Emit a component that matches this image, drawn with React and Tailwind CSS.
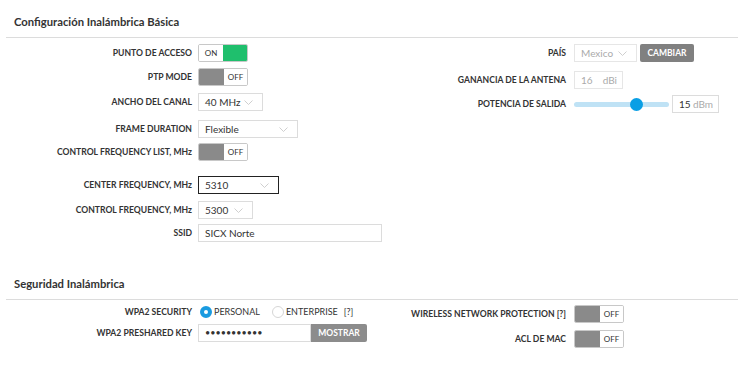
import React from "react";

const Chevron = () => (
  <svg width="9" height="5" viewBox="0 0 9 5" className="shrink-0">
    <polyline points="0.5,0.5 4.5,4.5 8.5,0.5" fill="none" stroke="#c9c9c9" strokeWidth="0.9" />
  </svg>
);

const Label = ({ children, right }) => (
  <div
    className={`${right ? "w-[191px] pr-[8px]" : "w-[198px] pr-[6px]"} shrink-0 text-right text-[8.6px] font-bold text-[#333] whitespace-nowrap`}
  >
    {children}
  </div>
);

const Toggle = ({ on }) =>
  on ? (
    <div className="flex h-[18px] w-[50px] border border-[#c8c8c8] rounded-[2px] overflow-hidden">
      <div className="w-[24px] flex items-center justify-center text-[8px] text-[#333] bg-white">ON</div>
      <div className="flex-1 bg-[#1fbf6d]" />
    </div>
  ) : (
    <div className="flex h-[18px] w-[50px] border border-[#c8c8c8] rounded-[2px] overflow-hidden">
      <div className="w-[25px] bg-[#8a8a8a]" />
      <div className="flex-1 flex items-center justify-center text-[8px] text-[#333] bg-white">OFF</div>
    </div>
  );

const Select = ({ value, w, dark, disabled }) => (
  <div
    className={`${w} h-[18px] flex items-center justify-between pl-[6px] pr-[9px] border ${
      dark ? "border-[#222]" : disabled ? "border-[#e6e6e6]" : "border-[#dcdcdc]"
    } bg-white`}
  >
    <span className={`text-[10px] ${disabled ? "text-[#aaa]" : "text-[#333]"}`}>{value}</span>
    <Chevron />
  </div>
);

const Row = ({ label, children, mt, right }) => (
  <div className={`flex items-center h-[18px] ${mt}`}>
    <Label right={right}>{label}</Label>
    <div className="flex items-center">{children}</div>
  </div>
);

export default function App() {
  return (
    <div className="w-[738px] h-[372px] bg-white overflow-hidden" style={{ fontFamily: "Lato, 'Open Sans', sans-serif" }}>
      {/* Section 1 */}
      <div className="pt-[15px] pl-[14px] h-[37px] text-[11.25px] font-bold text-[#333] leading-[14px]">
        Configuración Inalámbrica Básica
      </div>
      <div className="ml-[6px] h-px bg-[#dcdcdc]" />
      <div className="flex">
        <div className="w-[383px] shrink-0 flex flex-col">
          <Row label="PUNTO DE ACCESO" mt="mt-[6px]"><Toggle on /></Row>
          <Row label="PTP MODE" mt="mt-[6px]"><Toggle /></Row>
          <Row label="ANCHO DEL CANAL" mt="mt-[7px]"><Select value="40 MHz" w="w-[65px]" /></Row>
          <Row label="FRAME DURATION" mt="mt-[9px]"><Select value="Flexible" w="w-[100px]" /></Row>
          <Row label="CONTROL FREQUENCY LIST, MHz" mt="mt-[5px]"><Toggle /></Row>
          <Row label="CENTER FREQUENCY, MHz" mt="mt-[15px]"><Select value="5310" w="w-[81px]" dark /></Row>
          <Row label="CONTROL FREQUENCY, MHz" mt="mt-[7px]"><Select value="5300" w="w-[55px]" /></Row>
          <Row label="SSID" mt="mt-[5px]">
            <div className="w-[184px] h-[18px] border border-[#dcdcdc] flex items-center pl-[6px] text-[10px] text-[#333]">SICX Norte</div>
          </Row>
        </div>
        <div className="flex-1 flex flex-col">
          <Row label="PAÍS" mt="mt-[6px]" right>
            <Select value="Mexico" w="w-[63px]" disabled />
            <div className="ml-[3px] w-[54px] h-[18px] rounded-[2px] bg-[#808080] flex items-center justify-center text-[8.5px] font-bold text-white">CAMBIAR</div>
          </Row>
          <Row label="GANANCIA DE LA ANTENA" mt="mt-[9px]" right>
            <div className="w-[49px] h-[18px] border border-[#e6e6e6] flex items-center justify-between pl-[6px] pr-[5px] text-[10px] text-[#aaa]">
              <span>16</span><span>dBi</span>
            </div>
          </Row>
          <Row label="POTENCIA DE SALIDA" mt="mt-[6px]" right>
            <div className="relative w-[95px] h-[18px] flex items-center">
              <div className="w-full h-[5px] rounded-full bg-[#bfe2f5]" />
              <div className="absolute left-[56px] top-[2.5px] w-[13px] h-[13px] rounded-full bg-[#0a9fe5]" />
            </div>
            <div className="ml-[3px] w-[47px] h-[18px] border border-[#dcdcdc] flex items-center justify-between pl-[6px] pr-[5px] text-[10px]">
              <span className="text-[#333]">15</span><span className="text-[#aaa]">dBm</span>
            </div>
          </Row>
        </div>
      </div>

      {/* Section 2 */}
      <div className="pt-[35px] pl-[14px] h-[57px] text-[11.25px] font-bold text-[#333] leading-[14px]">
        Seguridad Inalámbrica
      </div>
      <div className="ml-[6px] h-px bg-[#dcdcdc]" />
      <div className="flex">
        <div className="w-[383px] shrink-0 flex flex-col">
          <Row label="WPA2 SECURITY" mt="mt-[3px]">
            <div className="w-[12px] h-[12px] rounded-full border-[4px] border-[#1a9be0] bg-white ml-[2px]" />
            <span className="ml-[2px] text-[9px] text-[#333]">PERSONAL</span>
            <div className="ml-[12px] w-[12px] h-[12px] rounded-full border border-[#d6d6d6] bg-white" />
            <span className="ml-[2px] text-[9px] text-[#333]">ENTERPRISE</span>
            <span className="ml-[6px] text-[9px] text-[#333]">[?]</span>
          </Row>
          <Row label="WPA2 PRESHARED KEY" mt="mt-[3px]">
            <div className="w-[113px] h-[18px] border border-[#dcdcdc] flex items-center pl-[6px] text-[9px] text-[#333]">•••••••••••</div>
            <div className="w-[56px] h-[18px] rounded-r-[2px] bg-[#8c8c8c] flex items-center justify-center text-[8.5px] font-bold text-white">MOSTRAR</div>
          </Row>
        </div>
        <div className="flex-1 flex flex-col">
          <Row label="WIRELESS NETWORK PROTECTION [?]" mt="mt-[5px]" right><Toggle /></Row>
          <Row label="ACL DE MAC" mt="mt-[7px]" right><Toggle /></Row>
        </div>
      </div>
    </div>
  );
}
